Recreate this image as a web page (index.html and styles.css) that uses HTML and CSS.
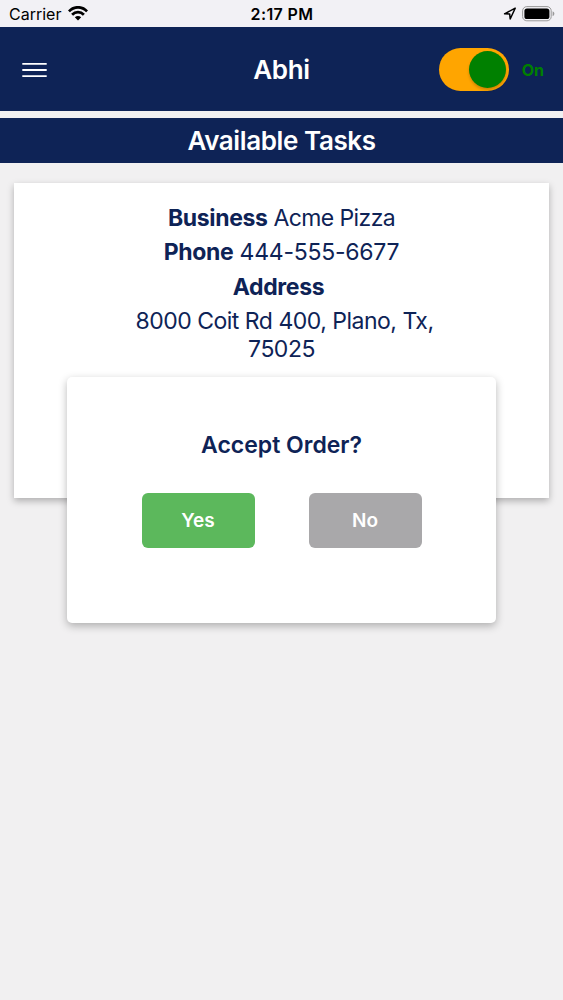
FILE: index.html
```html
<!DOCTYPE html>
<html>
  <head>
    <meta charset="utf-8">
    <title>Available Tasks</title>
    <link rel="stylesheet" href="styles.css">
  </head>
  <body>
    <div class="status-bar">
      <div class="carrier">
        <span>Carrier</span>
        <svg width="20" height="15" viewBox="0 0 20 15" fill="none" stroke="#000" stroke-width="2.7">
          <path d="M0.9 5.4 C6 -0.1 14 -0.1 19.1 5.4"/>
          <path d="M4.1 8.8 C7.5 5.2 12.5 5.2 15.9 8.8"/>
          <path d="M6.8 11.2 Q10 8.6 13.2 11.2 L10 14.6 Z" fill="#000" stroke="none"/>
        </svg>
      </div>
      <div class="clock">2:17 PM</div>
      <div class="indicators">
        <svg width="13" height="13" viewBox="0 0 13 13" fill="none" stroke="#000" stroke-width="1.5" stroke-linejoin="round">
          <path d="M12.2 1.2 L1.6 6.8 L6.7 7.1 L7.2 12 Z"/>
        </svg>
        <svg width="33" height="16" viewBox="0 0 33 16">
          <rect x="0.6" y="0.6" width="28.6" height="14.2" rx="4.2" fill="none" stroke="#999" stroke-width="1"/>
          <rect x="2.4" y="2.4" width="25" height="10.6" rx="2.6" fill="#000"/>
          <path d="M30.6 5.2 Q32.4 6 32.4 7.7 Q32.4 9.4 30.6 10.2 Z" fill="#999"/>
        </svg>
      </div>
    </div>

    <div class="header">
      <div class="menu-btn">
        <svg width="26" height="16" viewBox="0 0 26 16" stroke="#fff" stroke-width="1.8">
          <path d="M0.3 1.8 H24.7 M0.3 8 H24.7 M0.3 14.2 H24.7"/>
        </svg>
      </div>
      <h1>Abhi</h1>
      <div class="availability">
        <div class="switch"><div class="knob"></div></div>
        <span class="switch-label">On</span>
      </div>
    </div>

    <h2 class="section-title">Available Tasks</h2>

    <div class="task-card">
      <p class="business"><b>Business</b> Acme Pizza</p>
      <p class="phone"><b>Phone</b> 444-555-6677</p>
      <p><b>Address</b>&nbsp;</p>
      <p class="address">8000 Coit Rd 400, Plano, Tx, 75025</p>
    </div>

    <!-- Accept order popup -->
    <div class="modal">
      <h3>Accept Order?</h3>
      <div class="modal-buttons">
        <button class="btn btn-yes">Yes</button>
        <button class="btn btn-no">No</button>
      </div>
    </div>
  </body>
</html>
```
FILE: styles.css
```css
* {
  box-sizing: border-box;
}

body {
  margin: 0;
  position: relative;
  height: 1000px;
  overflow: hidden;
  background-color: #f1f0f1;
  font-family: Inter, "Liberation Sans", sans-serif;
  color: #0e2356;
}

h1, h2, h3, p {
  margin: 0;
}

/* Status bar */
.status-bar {
  display: grid;
  grid-template-columns: 1fr auto 1fr;
  align-items: center;
  height: 27.4px;
  padding: 0 8px 0 9px;
  background-color: #f2f1f5;
  color: #000;
  font-size: 16px;
}

.carrier {
  display: flex;
  align-items: center;
  gap: 7px;
}

.clock {
  font-weight: 600;
  letter-spacing: 0.4px;
}

.indicators {
  display: flex;
  align-items: center;
  justify-content: flex-end;
  gap: 6px;
}

/* Header */
.header {
  display: grid;
  grid-template-columns: 1fr auto 1fr;
  align-items: center;
  height: 84px;
  padding: 1px 19px 0 22px;
  background-color: #0e2356;
  color: #fff;
}

.menu-btn svg {
  display: block;
}

.header h1 {
  margin-right: 3px;
  font-size: 26px;
  font-weight: 600;
  letter-spacing: -0.3px;
}

.availability {
  display: flex;
  align-items: center;
  justify-content: flex-end;
  gap: 13px;
}

.switch {
  display: flex;
  justify-content: flex-end;
  align-items: center;
  width: 70px;
  height: 43px;
  padding: 3px;
  border-radius: 22px;
  background-color: #ffa500;
}

.knob {
  width: 37px;
  height: 37px;
  border-radius: 50%;
  background-color: #008000;
  box-shadow: 0 2px 3px rgba(0, 0, 0, 0.2);
}

.switch-label {
  color: #008000;
  font-size: 16px;
  font-weight: 700;
}

.section-title {
  height: 44.6px;
  margin-top: 7px;
  background-color: #0e2356;
  color: #fff;
  font-size: 26px;
  font-weight: 600;
  letter-spacing: -0.4px;
  line-height: 46px;
  text-align: center;
}

/* Task card */
.task-card {
  height: 315px;
  margin: 20px 14px 0;
  padding: 22px 110px;
  background-color: #fff;
  box-shadow: 0 3px 7px rgba(0, 0, 0, 0.28);
  font-size: 23px;
  line-height: 27.5px;
  text-align: center;
}

.task-card p {
  margin-bottom: 7px;
  letter-spacing: -0.5px;
}

.task-card .business {
  letter-spacing: -0.6px;
}

.task-card .phone {
  letter-spacing: -0.25px;
}

.task-card .address {
  text-indent: 6px;
}

.task-card b {
  letter-spacing: -0.35px;
}

/* Accept order popup */
.modal {
  position: absolute;
  top: 377px;
  left: 67px;
  width: 429px;
  height: 246px;
  padding-top: 54px;
  border-radius: 5px;
  background-color: #fff;
  box-shadow: 0 3px 8px rgba(0, 0, 0, 0.28);
  text-align: center;
}

.modal h3 {
  font-size: 23px;
  font-weight: 600;
  line-height: 28px;
}

.modal-buttons {
  display: flex;
  justify-content: center;
  gap: 54px;
  margin-top: 34px;
}

.btn {
  width: 113px;
  height: 55px;
  border: none;
  border-radius: 6px;
  color: #fff;
  font-family: inherit;
  font-size: 19px;
  font-weight: 600;
}

.btn-yes {
  background-color: #5cb85c;
}

.btn-no {
  background-color: #a9a8aa;
}
```
